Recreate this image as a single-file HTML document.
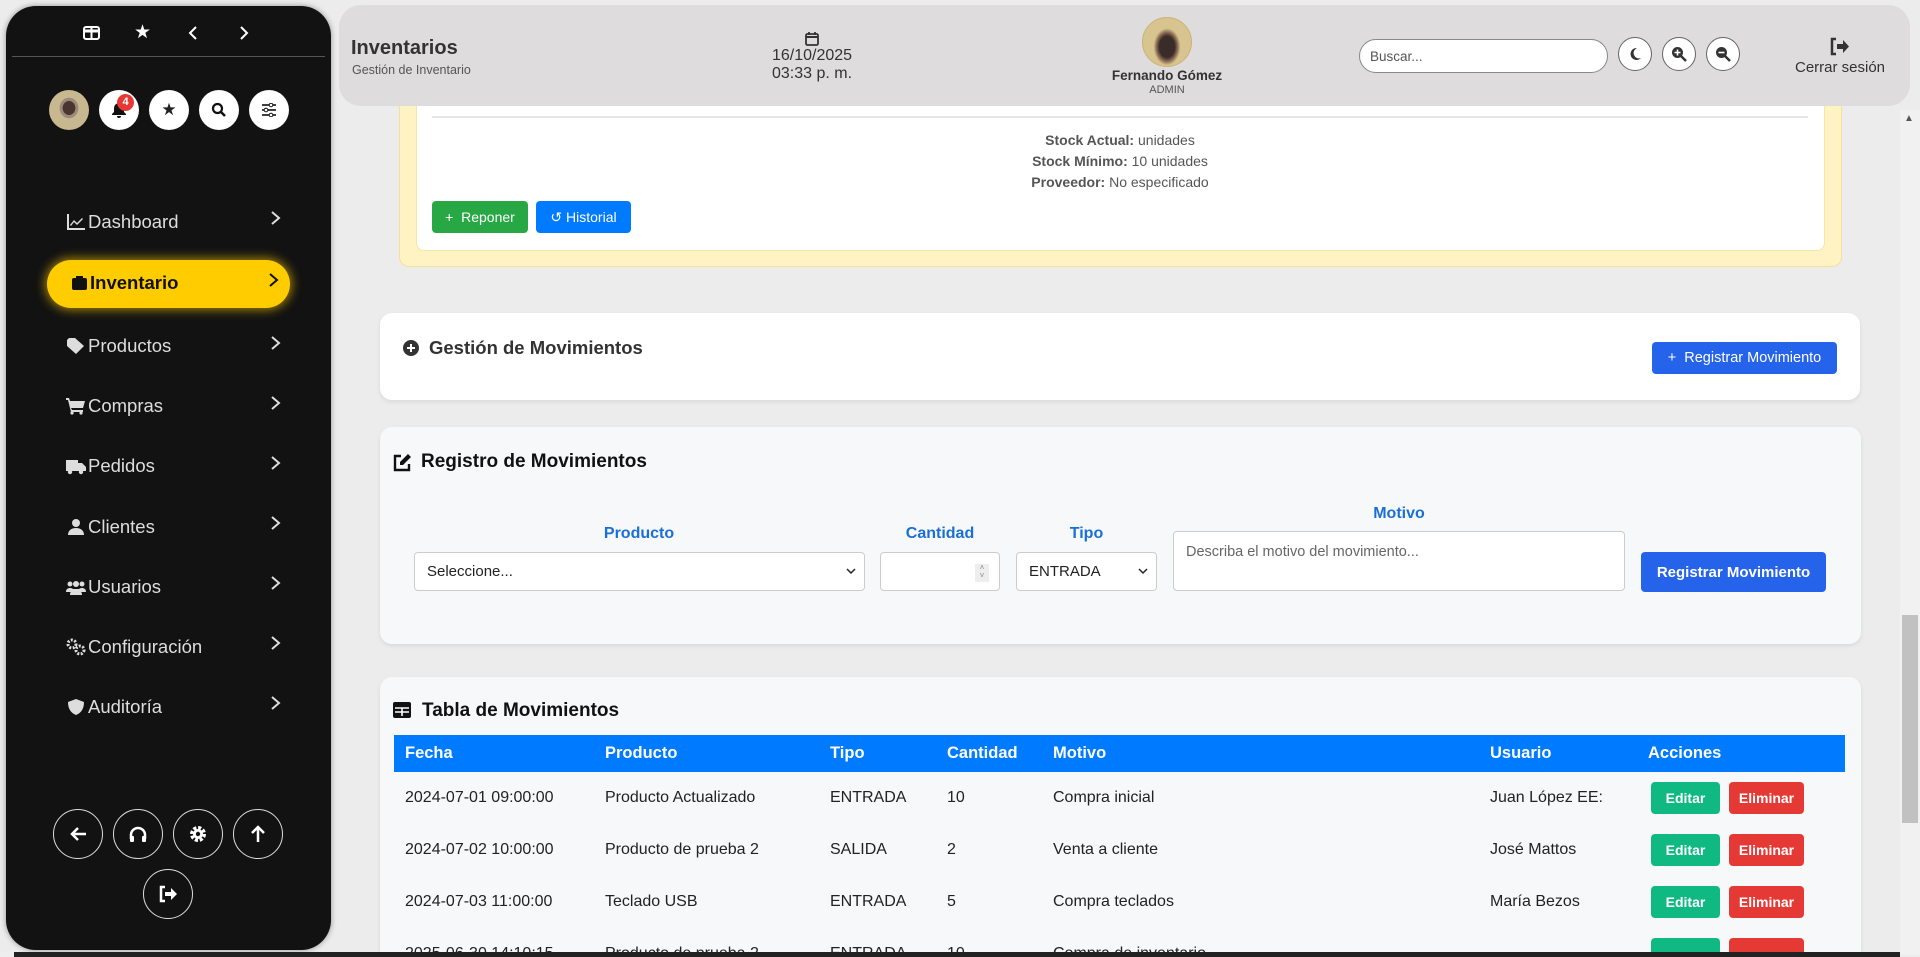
<!DOCTYPE html>
<html><head><meta charset="utf-8"><style>
*{box-sizing:border-box;margin:0;padding:0}
body{width:1920px;height:957px;overflow:hidden;background:#ececec;font-family:"Liberation Sans",Arial,sans-serif;position:relative;color:#222}
.a{position:absolute}
#sb{left:6px;top:6px;width:325px;height:944px;background:#121212;border-radius:30px;box-shadow:0 0 6px rgba(0,0,0,.4)}
.cb{width:40px;height:40px;border-radius:50%;background:#fff;top:90px;display:flex;align-items:center;justify-content:center}
.mi{left:66px;color:#ddd;font-size:18.5px;display:flex;align-items:center;gap:2px}
.mi svg{width:20px;height:18px;fill:#ddd}
.ch{left:270px;width:12px;height:14px}
.bc{width:50px;height:50px;border:1.5px solid #ddd;border-radius:50%;display:flex;align-items:center;justify-content:center}
#hd{left:339px;top:5px;width:1571px;height:101px;background:#dedcdc;border-radius:22px}
.rb{width:34px;height:34px;border:1px solid #666;background:#fff;border-radius:50%;top:37px;display:flex;align-items:center;justify-content:center}
.card{background:#fff;border-radius:12px;box-shadow:0 2px 5px rgba(0,0,0,.08)}
.lbl{color:#1a6fd6;font-weight:bold;font-size:16px;text-align:center}
.inp{background:#fff;border:1px solid #ccc;border-radius:4px;font-size:15px;color:#222;display:flex;align-items:center;padding-left:12px}
.btn{color:#fff;font-size:14px;border-radius:4px;display:flex;align-items:center;justify-content:center}
#clip{left:0;top:0;width:1900px;height:952px;overflow:hidden}
</style></head><body>
<div id="sb" class="a"></div>
<svg class="a" style="left:83px;top:26px" width="17" height="14"><rect x="1" y="1" width="15" height="12" rx="2" fill="none" stroke="#fff" stroke-width="2"/><line x1="8.5" y1="1" x2="8.5" y2="13" stroke="#fff" stroke-width="2"/><line x1="1" y1="5" x2="16" y2="5" stroke="#fff" stroke-width="3"/></svg>
<div class="a" style="left:134px;top:21px;color:#fff;font-size:19px">&#9733;</div>
<svg class="a" style="left:188px;top:26px" width="10" height="14"><path d="M8 1L2 7l6 6" fill="none" stroke="#fff" stroke-width="2"/></svg>
<svg class="a" style="left:239px;top:26px" width="10" height="14"><path d="M2 1l6 6-6 6" fill="none" stroke="#fff" stroke-width="2"/></svg>
<div class="a" style="left:12px;top:56px;width:313px;height:1px;background:#555"></div>
<div class="a cb" style="left:49px;background:radial-gradient(ellipse at 50% 45%,#4a3630 0 22%,#9b8a7a 23% 32%,#c8b890 34%)"></div>
<div class="a cb" style="left:99px"><svg width="16" height="16" viewBox="0 0 16 16"><path d="M8 1a5 5 0 0 0-5 5v4l-2 2v1h14v-1l-2-2V6a5 5 0 0 0-5-5zM6 14a2 2 0 0 0 4 0z" fill="#111"/></svg></div>
<div class="a" style="left:117px;top:94px;width:17px;height:17px;border-radius:50%;background:#e53935;color:#fff;font-size:11px;font-weight:bold;text-align:center;line-height:17px">4</div>
<div class="a cb" style="left:149px;font-size:17px">&#9733;</div>
<div class="a cb" style="left:199px"><svg width="16" height="16"><circle cx="6.5" cy="6.5" r="4.5" fill="none" stroke="#111" stroke-width="2.2"/><line x1="10" y1="10" x2="14" y2="14" stroke="#111" stroke-width="2.5"/></svg></div>
<div class="a cb" style="left:249px"><svg width="16" height="14"><g stroke="#111" stroke-width="1.6"><line x1="1" y1="2" x2="15" y2="2"/><line x1="1" y1="7" x2="15" y2="7"/><line x1="1" y1="12" x2="15" y2="12"/></g><circle cx="10" cy="2" r="1.8" fill="#fff" stroke="#111"/><circle cx="5" cy="7" r="1.8" fill="#fff" stroke="#111"/><circle cx="10" cy="12" r="1.8" fill="#fff" stroke="#111"/></svg></div>

<div class="a mi" style="top:211px"><svg viewBox="0 0 20 18"><path d="M1 1v16h18v-2H3V1z M4 12l4-5 3 3 5-5 1 1-6 6-3-3-3 4z"/></svg>Dashboard</div>
<svg class="a ch" style="top:211px"><path d="M2 1l7 6-7 6" fill="none" stroke="#ddd" stroke-width="2"/></svg>
<div class="a" style="left:47px;top:260px;width:243px;height:48px;border-radius:24px;background:#ffcc00;box-shadow:0 0 10px 2px rgba(255,204,0,.6)"></div>
<div class="a" style="left:71px;top:272px;font-size:18.5px;font-weight:bold;color:#111;display:flex;align-items:center;gap:2px"><svg width="17" height="16"><rect x="1" y="3" width="15" height="12" rx="2" fill="#111"/><rect x="5" y="1" width="7" height="3" fill="#111"/></svg>Inventario</div>
<svg class="a ch" style="top:273px;left:268px"><path d="M2 1l7 6-7 6" fill="none" stroke="#111" stroke-width="2"/></svg>
<div class="a mi" style="top:335px"><svg viewBox="0 0 20 18"><path d="M1 3v6l9 8 8-8-9-8H3z"/></svg>Productos</div>
<svg class="a ch" style="top:336px"><path d="M2 1l7 6-7 6" fill="none" stroke="#ddd" stroke-width="2"/></svg>
<div class="a mi" style="top:395px"><svg viewBox="0 0 20 18"><path d="M0 1h3l1 3h15l-2 7H5l1 2h11v2H5L2 3H0z"/><circle cx="6" cy="16" r="1.6"/><circle cx="15" cy="16" r="1.6"/></svg>Compras</div>
<svg class="a ch" style="top:396px"><path d="M2 1l7 6-7 6" fill="none" stroke="#ddd" stroke-width="2"/></svg>
<div class="a mi" style="top:455px"><svg viewBox="0 0 20 18"><path d="M0 3h12v11H0z M12 6h4l4 4v4h-8z"/><circle cx="4" cy="15" r="2.2"/><circle cx="15" cy="15" r="2.2"/></svg>Pedidos</div>
<svg class="a ch" style="top:456px"><path d="M2 1l7 6-7 6" fill="none" stroke="#ddd" stroke-width="2"/></svg>
<div class="a mi" style="top:516px"><svg viewBox="0 0 20 18"><circle cx="10" cy="5" r="4"/><path d="M2 17c0-5 4-7 8-7s8 2 8 7z"/></svg>Clientes</div>
<svg class="a ch" style="top:516px"><path d="M2 1l7 6-7 6" fill="none" stroke="#ddd" stroke-width="2"/></svg>
<div class="a mi" style="top:576px"><svg viewBox="0 0 20 18"><circle cx="4" cy="6" r="2.5"/><circle cx="16" cy="6" r="2.5"/><circle cx="10" cy="6" r="3"/><path d="M0 14c0-3 2-4 4-4s3 1 3 1h6s1-1 3-1 4 1 4 4z M4 17c0-4 3-6 6-6s6 2 6 6z"/></svg>Usuarios</div>
<svg class="a ch" style="top:576px"><path d="M2 1l7 6-7 6" fill="none" stroke="#ddd" stroke-width="2"/></svg>
<div class="a mi" style="top:636px"><svg viewBox="0 0 20 18"><circle cx="6" cy="6" r="4" fill="none" stroke="#ddd" stroke-width="3" stroke-dasharray="2 1.5"/><circle cx="14" cy="12" r="4" fill="none" stroke="#ddd" stroke-width="3" stroke-dasharray="2 1.5"/></svg>Configuración</div>
<svg class="a ch" style="top:636px"><path d="M2 1l7 6-7 6" fill="none" stroke="#ddd" stroke-width="2"/></svg>
<div class="a mi" style="top:696px"><svg viewBox="0 0 20 18"><path d="M10 1l8 3c0 7-3 11-8 13C5 15 2 11 2 4z"/></svg>Auditoría</div>
<svg class="a ch" style="top:696px"><path d="M2 1l7 6-7 6" fill="none" stroke="#ddd" stroke-width="2"/></svg>

<div class="a bc" style="left:53px;top:809px"><svg width="20" height="18"><path d="M18 9H4M10 3L4 9l6 6" fill="none" stroke="#fff" stroke-width="2.5"/></svg></div>
<div class="a bc" style="left:113px;top:809px"><svg width="20" height="18"><path d="M3 14V10a7 7 0 0 1 14 0v4" fill="none" stroke="#fff" stroke-width="2.5"/><rect x="2" y="11" width="4" height="6" rx="1" fill="#fff"/><rect x="14" y="11" width="4" height="6" rx="1" fill="#fff"/></svg></div>
<div class="a bc" style="left:173px;top:809px"><svg width="20" height="20"><circle cx="10" cy="10" r="6" fill="none" stroke="#fff" stroke-width="4" stroke-dasharray="3 1.7"/><circle cx="10" cy="10" r="5" fill="#fff"/><circle cx="10" cy="10" r="2.2" fill="#121212"/></svg></div>
<div class="a bc" style="left:233px;top:809px"><svg width="20" height="20"><path d="M10 18V3M4 9l6-6 6 6" fill="none" stroke="#fff" stroke-width="2.5"/></svg></div>
<div class="a bc" style="left:143px;top:869px"><svg width="20" height="18"><path d="M7 2H3v14h4" fill="none" stroke="#fff" stroke-width="2.5"/><path d="M7 7h6V3l6 6-6 6v-4H7z" fill="#fff"/></svg></div>

<!-- scrollbar -->
<div class="a" style="left:1900px;top:110px;width:20px;height:845px;background:#f1f1f1"></div>
<div class="a" style="left:1904px;top:113px;font-size:10px;color:#555">&#9650;</div>
<div class="a" style="left:1902px;top:615px;width:16px;height:208px;background:#c1c1c1"></div>

<div id="clip" class="a">
<!-- yellow card -->
<div class="a" style="left:399px;top:100px;width:1443px;height:167px;background:#fff3c4;border:1px solid #f2e19a;border-top:none;border-radius:0 0 10px 10px"></div>
<div class="a" style="left:416px;top:100px;width:1409px;height:151px;background:#fff;border-radius:0 0 8px 8px;border:1px solid #f4e6a8;border-top:none"></div>
<div class="a" style="left:432px;top:116px;width:1376px;height:2px;background:#e6e6e6"></div>
<div class="a" style="left:820px;top:130px;width:600px;text-align:center;font-size:14px;color:#555;line-height:21px"><b>Stock Actual:</b> unidades<br><b>Stock Mínimo:</b> 10 unidades<br><b>Proveedor:</b> No especificado</div>
<div class="a btn" style="left:432px;top:201px;width:96px;height:32px;background:#28a745;font-size:14px">+&nbsp; Reponer</div>
<div class="a btn" style="left:536px;top:201px;width:95px;height:32px;background:#007bff;font-size:14px">&#8634;&nbsp;Historial</div>

<!-- gestion -->
<div class="a card" style="left:380px;top:313px;width:1480px;height:87px"></div>
<svg class="a" style="left:403px;top:340px" width="16" height="16"><circle cx="8" cy="8" r="8" fill="#333"/><path d="M8 4v8M4 8h8" stroke="#fff" stroke-width="2"/></svg>
<div class="a" style="left:429px;top:337px;font-size:18.5px;font-weight:bold;color:#333">Gestión de Movimientos</div>
<div class="a btn" style="left:1652px;top:342px;width:185px;height:32px;background:#2563eb;font-size:14.5px">+&nbsp; Registrar Movimiento</div>

<!-- registro -->
<div class="a card" style="left:380px;top:427px;width:1481px;height:217px;background:#f7f8fa"></div>
<svg class="a" style="left:393px;top:453px" width="19" height="19"><path d="M8 3H2v14h14v-6" fill="none" stroke="#111" stroke-width="2.4"/><path d="M15 1l3 3-8 8H7V9z" fill="#111"/></svg>
<div class="a" style="left:421px;top:451px;font-size:19px;font-weight:bold;color:#111">Registro de Movimientos</div>
<div class="a lbl" style="left:1173px;top:505px;width:452px">Motivo</div>
<div class="a lbl" style="left:414px;top:525px;width:450px">Producto</div>
<div class="a lbl" style="left:880px;top:525px;width:120px">Cantidad</div>
<div class="a lbl" style="left:1016px;top:525px;width:141px">Tipo</div>
<div class="a inp" style="left:414px;top:552px;width:451px;height:39px">Seleccione...<svg style="position:absolute;right:8px" width="10" height="7"><path d="M1 1l4 4 4-4" fill="none" stroke="#222" stroke-width="1.5"/></svg></div>
<div class="a inp" style="left:880px;top:552px;width:120px;height:39px"><span style="position:absolute;right:10px;top:11px;width:14px;height:18px;background:#eee;font-size:8px;color:#888;text-align:center;line-height:8px">&#708;<br>&#709;</span></div>
<div class="a inp" style="left:1016px;top:552px;width:141px;height:39px">ENTRADA<svg style="position:absolute;right:8px" width="10" height="7"><path d="M1 1l4 4 4-4" fill="none" stroke="#222" stroke-width="1.5"/></svg></div>
<div class="a inp" style="left:1173px;top:531px;width:452px;height:60px;align-items:flex-start;padding-top:12px;color:#666;font-size:14.5px">Describa el motivo del movimiento...</div>
<div class="a btn" style="left:1641px;top:552px;width:185px;height:40px;background:#2563eb;font-weight:bold;font-size:15px">Registrar Movimiento</div>

<!-- tabla -->
<div class="a card" style="left:380px;top:677px;width:1481px;height:300px;background:#f7f8fa"></div>
<svg class="a" style="left:393px;top:702px" width="18" height="16"><rect x="0" y="0" width="18" height="16" rx="2" fill="#111"/><path d="M2 6h14M9 6v8M2 10h14" stroke="#fff" stroke-width="1.6"/></svg>
<div class="a" style="left:422px;top:700px;font-size:19px;font-weight:bold;color:#111">Tabla de Movimientos</div>
<div class="a" style="left:394px;top:735px;width:1451px;height:37px;background:#007bff"></div>
<div class="a" style="left:394px;top:735px;width:1451px;height:37px;color:#fff;font-weight:bold;font-size:16.5px">
<span class="a" style="left:11px;top:9px">Fecha</span><span class="a" style="left:211px;top:9px">Producto</span><span class="a" style="left:436px;top:9px">Tipo</span><span class="a" style="left:553px;top:9px">Cantidad</span><span class="a" style="left:659px;top:9px">Motivo</span><span class="a" style="left:1096px;top:9px">Usuario</span><span class="a" style="left:1254px;top:9px">Acciones</span></div>

<div class="a" style="left:394px;top:789px;width:1451px;font-size:16px;color:#222">
<span class="a" style="left:11px">2024-07-01 09:00:00</span><span class="a" style="left:211px">Producto Actualizado</span><span class="a" style="left:436px">ENTRADA</span><span class="a" style="left:553px">10</span><span class="a" style="left:659px">Compra inicial</span><span class="a" style="left:1096px">Juan López EE:</span></div>
<div class="a" style="left:394px;top:841px;width:1451px;font-size:16px;color:#222">
<span class="a" style="left:11px">2024-07-02 10:00:00</span><span class="a" style="left:211px">Producto de prueba 2</span><span class="a" style="left:436px">SALIDA</span><span class="a" style="left:553px">2</span><span class="a" style="left:659px">Venta a cliente</span><span class="a" style="left:1096px">José Mattos</span></div>
<div class="a" style="left:394px;top:893px;width:1451px;font-size:16px;color:#222">
<span class="a" style="left:11px">2024-07-03 11:00:00</span><span class="a" style="left:211px">Teclado USB</span><span class="a" style="left:436px">ENTRADA</span><span class="a" style="left:553px">5</span><span class="a" style="left:659px">Compra teclados</span><span class="a" style="left:1096px">María Bezos</span></div>
<div class="a" style="left:394px;top:945px;width:1451px;font-size:16px;color:#222">
<span class="a" style="left:11px">2025-06-30 14:10:15</span><span class="a" style="left:211px">Producto de prueba 2</span><span class="a" style="left:436px">ENTRADA</span><span class="a" style="left:553px">10</span><span class="a" style="left:659px">Compra de inventario</span></div>

<div class="a btn" style="left:1651px;top:782px;width:69px;height:32px;background:#10b981;font-weight:bold">Editar</div>
<div class="a btn" style="left:1729px;top:782px;width:75px;height:32px;background:#e53935;font-weight:bold">Eliminar</div>
<div class="a btn" style="left:1651px;top:834px;width:69px;height:32px;background:#10b981;font-weight:bold">Editar</div>
<div class="a btn" style="left:1729px;top:834px;width:75px;height:32px;background:#e53935;font-weight:bold">Eliminar</div>
<div class="a btn" style="left:1651px;top:886px;width:69px;height:32px;background:#10b981;font-weight:bold">Editar</div>
<div class="a btn" style="left:1729px;top:886px;width:75px;height:32px;background:#e53935;font-weight:bold">Eliminar</div>
<div class="a btn" style="left:1651px;top:938px;width:69px;height:32px;background:#10b981"></div>
<div class="a btn" style="left:1729px;top:938px;width:75px;height:32px;background:#e53935"></div>
</div>

<div id="hd" class="a"></div>
<div class="a" style="left:351px;top:37px;font-size:20px;font-weight:bold;color:#333">Inventarios</div>
<div class="a" style="left:352px;top:63px;font-size:12.5px;color:#555">Gestión de Inventario</div>
<svg class="a" style="left:805px;top:31px" width="14" height="15"><rect x="1" y="3" width="12" height="11" rx="1.5" fill="none" stroke="#333" stroke-width="1.8"/><line x1="1" y1="6" x2="13" y2="6" stroke="#333" stroke-width="2"/><line x1="4" y1="1" x2="4" y2="4" stroke="#333" stroke-width="1.8"/><line x1="10" y1="1" x2="10" y2="4" stroke="#333" stroke-width="1.8"/></svg>
<div class="a" style="left:712px;top:47px;width:200px;text-align:center;font-size:16px;color:#333;line-height:18px">16/10/2025<br>03:33 p. m.</div>
<div class="a" style="left:1142px;top:17px;width:50px;height:50px;border-radius:50%;background:radial-gradient(ellipse 40% 55% at 50% 60%,#3a2c28 0 40%,#8a6b55 55%,#d8c48e 70%);border:1px solid #c9b37a"></div>
<div class="a" style="left:1067px;top:68px;width:200px;text-align:center;font-size:13.5px;font-weight:bold;color:#333">Fernando Gómez</div>
<div class="a" style="left:1067px;top:84px;width:200px;text-align:center;font-size:11px;color:#555">ADMIN</div>
<div class="a" style="left:1359px;top:39px;width:249px;height:34px;border:1px solid #888;background:#fff;border-radius:17px;font-size:13.5px;color:#555;padding:9px 0 0 10px">Buscar...</div>
<div class="a rb" style="left:1618px"><svg width="14" height="14"><path d="M9 1a6 6 0 1 0 4 10A5 5 0 0 1 9 1z" fill="#333"/></svg></div>
<div class="a rb" style="left:1662px"><svg width="16" height="16"><circle cx="6.5" cy="6.5" r="5.5" fill="#333"/><line x1="10" y1="10" x2="15" y2="15" stroke="#333" stroke-width="2.5"/><path d="M6.5 3.5v6M3.5 6.5h6" stroke="#fff" stroke-width="1.6"/></svg></div>
<div class="a rb" style="left:1706px"><svg width="16" height="16"><circle cx="6.5" cy="6.5" r="5.5" fill="#333"/><line x1="10" y1="10" x2="15" y2="15" stroke="#333" stroke-width="2.5"/><path d="M3.5 6.5h6" stroke="#fff" stroke-width="1.6"/></svg></div>
<svg class="a" style="left:1829px;top:37px" width="22" height="19"><path d="M7 2H3v15h4" fill="none" stroke="#333" stroke-width="2.5"/><path d="M8 7h6V3l6 6.5-6 6.5v-4H8z" fill="#333"/></svg>
<div class="a" style="left:1780px;top:59px;width:120px;text-align:center;font-size:15px;color:#333">Cerrar sesión</div>

<div class="a" style="left:0;top:952px;width:1900px;height:5px;background:#222"></div>
<div class="a" style="left:0;top:952px;width:14px;height:5px;background:#eee"></div>
</body></html>
